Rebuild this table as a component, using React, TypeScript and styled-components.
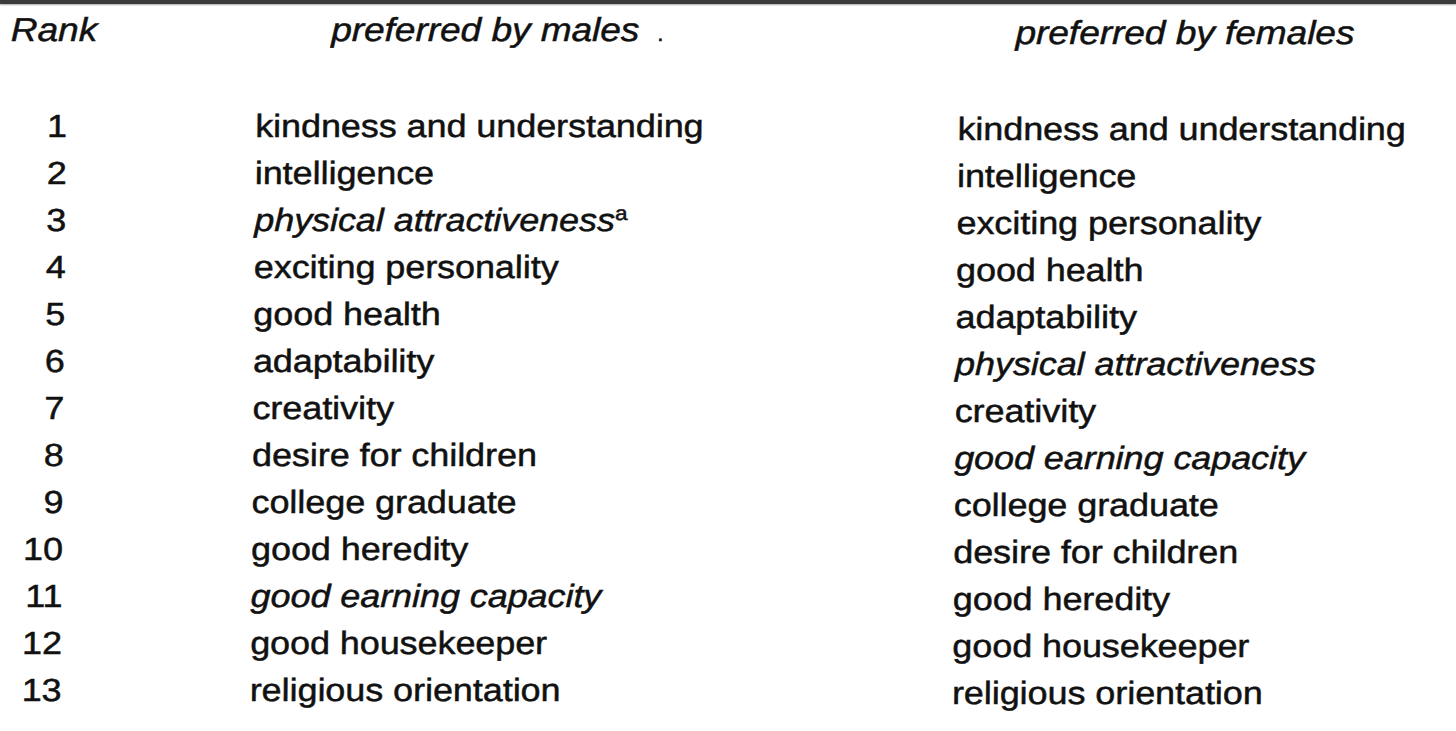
import React from "react";
import styled, { createGlobalStyle } from "styled-components";

const GlobalStyle = createGlobalStyle`
  html, body {
    margin: 0;
    padding: 0;
    background: #ffffff;
    overflow: hidden;
  }
  body {
    font-family: "Liberation Sans", Arial, Helvetica, sans-serif;
    color: #111111;
  }
`;

const Page = styled.div`
  width: 1456px;
  height: 731px;
  background: #ffffff;
  overflow: hidden;
`;

const TopBar = styled.div`
  height: 4px;
  background: #3b3b3b;
  box-shadow: 0 1px 2px rgba(0, 0, 0, 0.35);
`;

const Table = styled.div`
  display: flex;
  width: 1290px;
  padding-top: 2px;
  transform-origin: 0 0;
  transform: scaleX(1.12) skewX(-0.5deg);
  font-size: 32px;
  line-height: 47px;
  -webkit-text-stroke: 0.5px #111111;
`;

const Column = styled.div<{ $width: number; $offset: number; $drop?: number }>`
  display: flex;
  flex-direction: column;
  flex: 0 0 ${(p) => p.$width}px;
  min-width: 0;
  margin-left: ${(p) => p.$offset}px;
  padding-top: ${(p) => p.$drop ?? 0}px;
`;

const Header = styled.div<{ $indent: number }>`
  height: 97px;
  padding-left: ${(p) => p.$indent}px;
  font-size: 33px;
  font-style: italic;
  white-space: nowrap;
`;

const Speck = styled.span`
  margin-left: 16px;
  font-style: normal;
  font-size: 20px;
`;

const Cell = styled.div<{ $italic?: boolean; $align?: "left" | "right" }>`
  height: 47px;
  white-space: nowrap;
  font-style: ${(p) => (p.$italic ? "italic" : "normal")};
  text-align: ${(p) => p.$align ?? "left"};
`;

const Sup = styled.span`
  font-style: normal;
  font-size: 20px;
  line-height: 0;
  vertical-align: 11px;
`;

type Entry = { label: string; italic?: boolean; note?: string };

const males: Entry[] = [
  { label: "kindness and understanding" },
  { label: "intelligence" },
  { label: "physical attractiveness", italic: true, note: "a" },
  { label: "exciting personality" },
  { label: "good health" },
  { label: "adaptability" },
  { label: "creativity" },
  { label: "desire for children" },
  { label: "college graduate" },
  { label: "good heredity" },
  { label: "good earning capacity", italic: true },
  { label: "good housekeeper" },
  { label: "religious orientation" },
];

const females: Entry[] = [
  { label: "kindness and understanding" },
  { label: "intelligence" },
  { label: "exciting personality" },
  { label: "good health" },
  { label: "adaptability" },
  { label: "physical attractiveness", italic: true },
  { label: "creativity" },
  { label: "good earning capacity", italic: true },
  { label: "college graduate" },
  { label: "desire for children" },
  { label: "good heredity" },
  { label: "good housekeeper" },
  { label: "religious orientation" },
];

const renderEntries = (list: Entry[]) =>
  list.map((e) => (
    <Cell key={e.label} $italic={e.italic}>
      {e.label}
      {e.note && <Sup>{e.note}</Sup>}
    </Cell>
  ));

export default function App() {
  return (
    <Page>
      <GlobalStyle />
      <TopBar />
      <Table>
        <Column $width={61} $offset={0}>
          <Header $indent={10}>Rank</Header>
          {males.map((_, i) => (
            <Cell key={i} $align="right">
              {i + 1}
            </Cell>
          ))}
        </Column>
        <Column $width={627} $offset={168}>
          <Header $indent={67}>
            preferred by males<Speck>.</Speck>
          </Header>
          {renderEntries(males)}
        </Column>
        <Column $width={430} $offset={0} $drop={3}>
          <Header $indent={51}>preferred by females</Header>
          {renderEntries(females)}
        </Column>
      </Table>
    </Page>
  );
}
